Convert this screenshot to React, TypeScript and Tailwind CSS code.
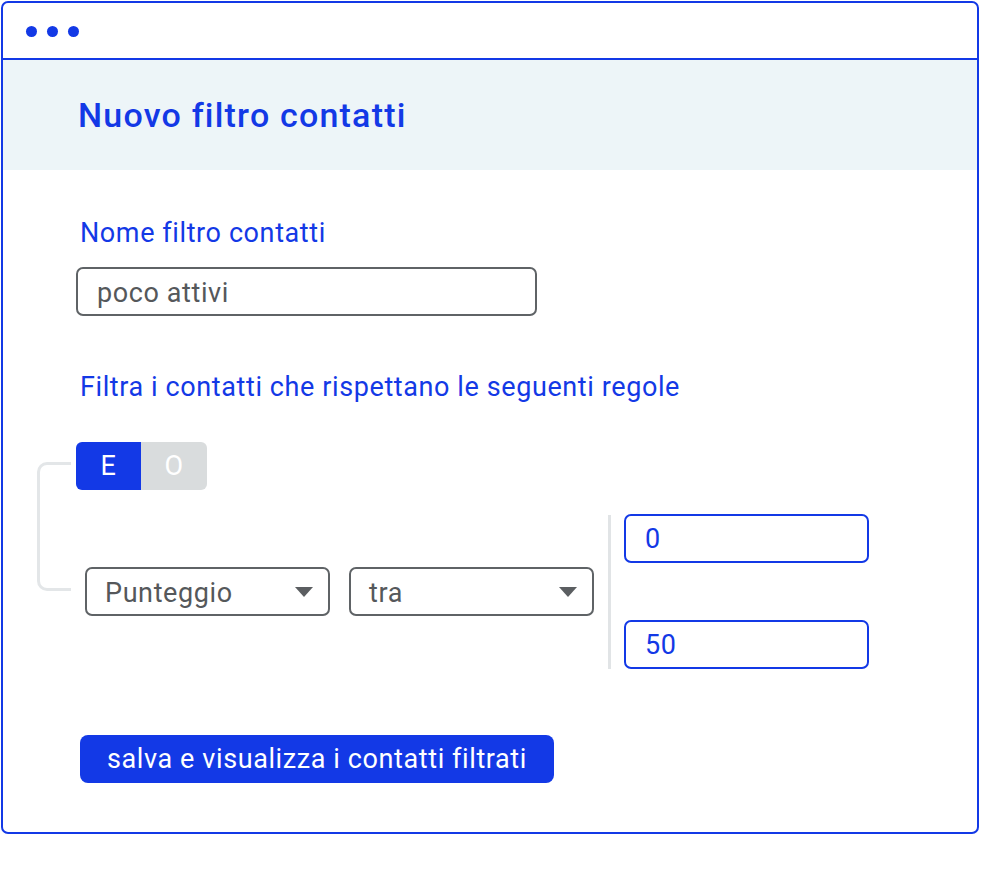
import React from "react";

const BLUE = "#1339e6";

function Caret() {
  return (
    <svg width="20" height="12" viewBox="0 0 20 12" className="shrink-0">
      <path d="M1 1 L19 1 L10 11 Z" fill="#5b5e61" />
    </svg>
  );
}

function Dropdown({ label }: { label: string }) {
  return (
    <div className="flex h-[49px] w-[245px] items-center justify-between rounded-[7px] border-2 border-[#5f6366] bg-white pl-[18px] pr-[14px] text-[27px] tracking-[0.6px] text-[#55585b]">
      <span className="pt-[3px]">{label}</span>
      <Caret />
    </div>
  );
}

function NumberBox({ value }: { value: string }) {
  return (
    <div className="flex h-[49px] w-[245px] items-center rounded-[7px] border-2 border-[#1339e6] pl-[19px] pt-[2px] text-[27px] tracking-[0.6px] text-[#1339e6]">
      {value}
    </div>
  );
}

export default function App() {
  return (
    <div
      className="min-h-screen bg-white pl-[1px] pt-[1px] [font-variant-ligatures:none]"
      style={{ fontFamily: "Roboto, 'Noto Sans', sans-serif" }}
    >
      <div className="flex h-[833px] w-[978px] flex-col overflow-hidden rounded-[7px] border-2 border-[#1339e6]">
        {/* Window chrome */}
        <div className="flex h-[57px] items-center gap-[10px] border-b-2 border-[#1339e6] pl-[23px] pt-[2px]">
          <span className="h-[11px] w-[11px] rounded-full bg-[#1339e6]" />
          <span className="h-[11px] w-[11px] rounded-full bg-[#1339e6]" />
          <span className="h-[11px] w-[11px] rounded-full bg-[#1339e6]" />
        </div>

        {/* Title band */}
        <div className="flex h-[110px] items-center bg-[#edf5f8] pl-[75px]">
          <h1 className="text-[34px] font-medium tracking-[1.2px] text-[#1339e6]">Nuovo filtro contatti</h1>
        </div>

        {/* Form */}
        <div className="flex flex-col pl-[73px] text-[27px] tracking-[0.6px]">
          <label className="mt-[49px] pl-[4px] leading-[28px] text-[#1339e6]">
            Nome filtro contatti
          </label>
          <div className="mt-[20px] flex h-[49px] w-[461px] items-center rounded-[7px] border-2 border-[#5f6366] pl-[19px] pt-[3px] text-[#55585b]">
            poco attivi
          </div>

          <p className="mt-[57px] pl-[4px] leading-[28px] text-[#1339e6]">
            Filtra i contatti che rispettano le seguenti regole
          </p>

          {/* Rules */}
          <div className="-ml-[39px] mt-[41px] flex">
            <div className="mt-[20px] h-[129px] w-[34px] shrink-0 rounded-l-[10px] border-y-[3px] border-l-[3px] border-[#e3e6e8]" />
            <div className="ml-[5px] flex flex-col">
              <div className="flex h-[48px] w-[131px] overflow-hidden rounded-[6px] text-white">
                <div className="flex w-[65px] items-center justify-center bg-[#1339e6]">E</div>
                <div className="flex flex-1 items-center justify-center bg-[#d9dcdd]">O</div>
              </div>
              <div className="ml-[9px] mt-[24px] flex items-center">
                <Dropdown label="Punteggio" />
                <div className="ml-[19px]">
                  <Dropdown label="tra" />
                </div>
                <div className="ml-[14px] h-[154px] w-[3px] bg-[#e1e4e6]" />
                <div className="ml-[13px] flex flex-col gap-[57px]">
                  <NumberBox value="0" />
                  <NumberBox value="50" />
                </div>
              </div>
            </div>
          </div>

          <button
            className="ml-[4px] mt-[66px] flex h-[48px] w-[474px] items-center justify-center rounded-[8px] text-white"
            style={{ backgroundColor: BLUE }}
          >
            salva e visualizza i contatti filtrati
          </button>
        </div>
      </div>
    </div>
  );
}
